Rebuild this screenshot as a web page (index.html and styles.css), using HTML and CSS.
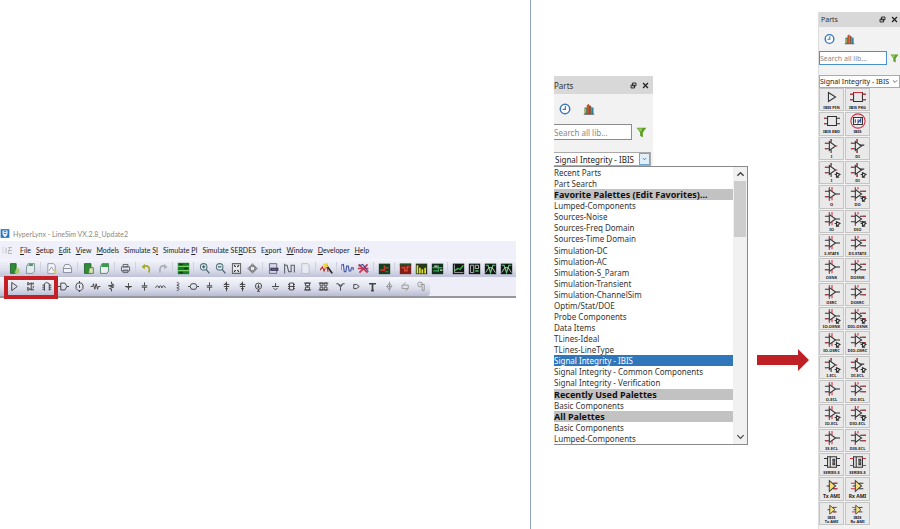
FILE: index.html
```html
<!DOCTYPE html>
<html lang="en">
<head>
  <meta charset="UTF-8">
  <title>HyperLynx - LineSim</title>
  <link rel="stylesheet" href="styles.css">
</head>
<body>
  <!-- shared icons -->
  <svg class="defs" aria-hidden="true">
    <symbol id="clock" viewBox="0 0 16 16"><circle cx="8" cy="8" r="6.3" fill="#fff" stroke="#3b78b8" stroke-width="2"/><path d="M8.500 4v4.500H5" fill="none" stroke="#3b78b8" stroke-width="1.500"/></symbol>
    <symbol id="books" viewBox="0 0 16 16"><path d="M2 6h4v9H2z" fill="#3f8f6b"/><path d="M5 3l3-2v14H5z" fill="#c6502f"/><path d="M8 3l3 1v11H8z" fill="#7d5a3b"/><path d="M11 6h3v9h-3z" fill="#2e7fa0"/><path d="M2 8h2v5H2z" fill="#d9a63b"/><path d="M1 15h14" stroke="#444"/></symbol>
    <symbol id="funnel" viewBox="0 0 16 16"><path d="M1 1h14L10 8v7l-4-2V8z" fill="#5c9e25"/><path d="M3 2h6L7 7z" fill="#9bd25c"/></symbol>
    <symbol id="float" viewBox="0 0 10 10"><path d="M3.500 1.500h5v4h-5zM1.500 4.500h5v4h-5z" fill="#ddd" stroke="#222" stroke-width="1.400"/></symbol>
    <symbol id="close" viewBox="0 0 10 10"><path d="M1.500 1.500l7 7M8.500 1.500l-7 7" stroke="#222" stroke-width="1.800"/></symbol>
    <symbol id="down" viewBox="0 0 10 10"><path d="M1.500 3L5 6.500 8.500 3" fill="none" stroke="#444" stroke-width="1.300"/></symbol>
    <symbol id="up" viewBox="0 0 10 10"><path d="M1.500 7L5 3.500 8.500 7" fill="none" stroke="#444" stroke-width="1.600"/></symbol>

    <!-- file toolbar -->
    <symbol id="new" viewBox="0 0 16 16"><path d="M3 2h7v12H3z" fill="#2f8b35" stroke="#1d5c23"/><path d="M10 8h4v6H8z" fill="#a6cf68"/></symbol>
    <symbol id="folder" viewBox="0 0 16 16"><path d="M3 6l2-4h8v9l-2 3H3z" fill="#e4e9ee" stroke="#6b8490"/><path d="M5 5l2-3h4v3z" fill="#4a9b5d"/></symbol>
    <symbol id="page" viewBox="0 0 16 16"><path d="M3.500 2h7l2 2v10h-9z" fill="#f5f6fc" stroke="#87899a"/><path d="M5 11l3-5 3 5" fill="none" stroke="#87899a"/><path d="M11 10h3v4h-3z" fill="#d8cf7a"/></symbol>
    <symbol id="blank" viewBox="0 0 16 16"><path d="M3.500 2h7l2 2v10h-9z" fill="#e9eaf2" stroke="#b5b7c5"/></symbol>
    <symbol id="open" viewBox="0 0 16 16"><path d="M3 7l2-4h5l3 4v6H3z" fill="#f2f3fa" stroke="#777b8c"/><path d="M3 8h9" stroke="#777b8c"/></symbol>
    <symbol id="book" viewBox="0 0 16 16"><path d="M3 2h8v12H3z" fill="#2f8b35" stroke="#1d5c23"/><path d="M9 7h5v7H8z" fill="#d6e4b0" stroke="#3a7a3c"/></symbol>
    <symbol id="save" viewBox="0 0 16 16"><path d="M3 6l2-4h8v9l-2 3H3z" fill="#eceef5" stroke="#3d7a4d"/><path d="M5 2h8v4H4z" fill="#3d9a4d"/></symbol>
    <symbol id="print" viewBox="0 0 16 16"><path d="M5 3h6v3H5zM3 6h10v5H3zM5 10h6v3H5z" fill="#dfe2ea" stroke="#4b4f5a"/></symbol>
    <symbol id="undo" viewBox="0 0 16 16"><path d="M4 6c5-3 9 0 7 7" fill="none" stroke="#a2a82c" stroke-width="2"/><path d="M2 6l4-4v7z" fill="#a2a82c"/></symbol>
    <symbol id="redo" viewBox="0 0 16 16"><path d="M12 6C7 3 4 6 5 13" fill="none" stroke="#a9adb8" stroke-width="2"/><path d="M14 6l-4-4v7z" fill="#a9adb8"/></symbol>
    <symbol id="stack" viewBox="0 0 16 16"><path d="M1 1h14v14H1z" fill="#187a25"/><path d="M1 5.500h14M1 10.500h14" stroke="#7ad06a" stroke-width="1.500"/><path d="M3 3h4M9 8h4M3 13h4" stroke="#0c3d12" stroke-width="2"/></symbol>
    <symbol id="zoomin" viewBox="0 0 16 16"><circle cx="7" cy="6" r="4" fill="#e5edf1" stroke="#557a85" stroke-width="1.400"/><path d="M10 9l4 5M5 6h4M7 4v4" stroke="#3e5d68" stroke-width="1.400"/></symbol>
    <symbol id="zoomout" viewBox="0 0 16 16"><circle cx="7" cy="6" r="4" fill="#e5edf1" stroke="#557a85" stroke-width="1.400"/><path d="M10 9l4 5M5 6h4" stroke="#3e5d68" stroke-width="1.400"/></symbol>
    <symbol id="fit" viewBox="0 0 16 16"><path d="M3 2h10v12H3z" fill="#e8eaef" stroke="#666" stroke-width="1.300"/><path d="M5 4l2 2M11 4L9 6M5 12l2-2M11 12l-2-2" stroke="#333" stroke-width="1.500"/></symbol>
    <symbol id="pan" viewBox="0 0 16 16"><path d="M8 2l2 3H6zM8 14l2-3H6zM2 8l3-2v4zM14 8l-3-2v4zM5 5h6v6H5z" fill="#e5e7ee" stroke="#666"/></symbol>
    <symbol id="scope" viewBox="0 0 16 16"><path d="M3 2h9v12H3z" fill="#d3d6ec" stroke="#55566a"/><path d="M4 7h10v4H4z" fill="#3d3f60"/><path d="M6 9h6" stroke="#d44"/></symbol>
    <symbol id="wave" viewBox="0 0 16 16"><path d="M2 2v12M2 4h3l2 8h3V4h4v9" fill="none" stroke="#5b5d66" stroke-width="1.300"/></symbol>
    <symbol id="wand" viewBox="0 0 16 16"><path d="M0 10l3-4 2 5 3-7 2 8" fill="none" stroke="#c8322a" stroke-width="1.500"/><path d="M8 4l7 10" stroke="#222" stroke-width="2"/><path d="M5 1l2 2 3-2-1 3 2 2H8L6 9V6L4 4z" fill="#ecd530"/></symbol>
    <symbol id="sine" viewBox="0 0 16 16"><path d="M0 10V4l3-1 1 9h2l1-7h2l1 6h2l1-4h2v3" fill="none" stroke="#3b50a5" stroke-width="1.300"/></symbol>
    <symbol id="cross" viewBox="0 0 16 16"><path d="M2 3l11 10M3 13L13 3M1 8h13" stroke="#c63654" stroke-width="2"/><path d="M2 5l5-2 4 5 3 4" fill="none" stroke="#4b4994" stroke-width="1.500"/></symbol>
    <symbol id="board" viewBox="0 0 16 16"><path d="M1 2h14v13H1z" fill="#173f20"/><path d="M3 10h5V4M8 7h5" fill="none" stroke="#c4342b" stroke-width="2"/><path d="M9 12h4" stroke="#35a349"/></symbol>
    <symbol id="heat" viewBox="0 0 16 16"><path d="M1 2h14v13H1z" fill="#7e2018"/><path d="M3 7h4v4h3V6h3" fill="none" stroke="#de4c36" stroke-width="1.500"/><path d="M1 2h14v2H1z" fill="#244b23"/></symbol>
    <symbol id="bars" viewBox="0 0 16 16"><path d="M1 2h14v13H1z" fill="#26381a"/><path d="M3 4v10M6 7v7M9 9v5M12.500 7v7" stroke="#e5e52c" stroke-width="2"/></symbol>
    <symbol id="grid" viewBox="0 0 16 16"><path d="M1 2h14v13H1z" fill="#12301c"/><path d="M2 7h12M3 11h6M9 4v8" stroke="#3cae56" stroke-width="1.500"/><path d="M4 5h4M11 10h3" stroke="#ddd" stroke-width="1.500"/></symbol>
    <symbol id="plot" viewBox="0 0 16 16"><path d="M1 2h14v13H1z" fill="#111914"/><path d="M3 3v10h11" fill="none" stroke="#bbb"/><path d="M3 11l4-3 3 1 4-5" fill="none" stroke="#4bbd5e" stroke-width="1.500"/></symbol>
    <symbol id="smith" viewBox="0 0 16 16"><path d="M1 2h14v13H1z" fill="#111914"/><path d="M3 4v9h4V4zM9 4h4v4H9z" fill="none" stroke="#ccc"/><path d="M9 11h4" stroke="#4bbd5e" stroke-width="2"/></symbol>
    <symbol id="eye" viewBox="0 0 16 16"><path d="M1 2h14v13H1z" fill="#111914"/><path d="M2 4h3l3 9 3-9h3" fill="none" stroke="#63c873" stroke-width="1.500"/><path d="M2 13l4-6h4l4 6" fill="none" stroke="#ddd"/></symbol>

    <!-- component toolbar -->
    <symbol id="buf" viewBox="0 0 16 16"><path d="M4 2v12l8-6z"/></symbol>
    <symbol id="ibis" viewBox="0 0 16 16"><path d="M4 2v4l3-2zM4 9v5l3-2zM9 2v12M12 2v3M12 7v3M12 12v2M7 4h5M7 12h5"/></symbol>
    <symbol id="chip" viewBox="0 0 16 16"><path d="M5 14V4l3-2 4 2v10M2 6h3M2 9h3M2 12h3M12 6h3M12 9h3M12 12h3"/></symbol>
    <symbol id="tline" viewBox="0 0 16 16"><path d="M0 8h4M13 8h3M4 3h6l3 5-3 5H4z"/></symbol>
    <symbol id="cyl" viewBox="0 0 16 16"><path d="M8 0v3M8 14v2M5 3h6l2 3v5l-3 3H6l-3-3V6zM8 6v4"/></symbol>
    <symbol id="res" viewBox="0 0 16 16"><path d="M1 8h3l1-4 2 8 2-8 2 8 1-4h3"/></symbol>
    <symbol id="pull" viewBox="0 0 16 16"><path d="M8 1v3l3 1-6 2 6 2-6 2 3 1v3M3 7h9"/></symbol>
    <symbol id="cap" viewBox="0 0 16 16"><path d="M8 3v4M8 9v4M3 8h10M5 9h6"/></symbol>
    <symbol id="gcap" viewBox="0 0 16 16"><path d="M8 2v5M8 9v5M4 7h8M4 9h8"/></symbol>
    <symbol id="arc" viewBox="0 0 16 16"><path d="M1 10c1-4 4-4 5 0 0-4 4-4 4 0 1-4 4-4 5 0"/></symbol>
    <symbol id="ind" viewBox="0 0 16 16"><path d="M7 2c4 0 4 4 0 4 4 0 4 4 0 4 4 0 4 4 0 4"/></symbol>
    <symbol id="bead" viewBox="0 0 16 16"><path d="M0 8h3M13 8h3M5 4h6l2 4-2 4H5L3 8z"/></symbol>
    <symbol id="src" viewBox="0 0 16 16"><path d="M8 12v3M6 15h4M8 5v5M6 8l2 2 2-2"/><circle cx="8" cy="7.500" r="4.500"/></symbol>
    <symbol id="diff" viewBox="0 0 16 16"><path d="M8 1v14M4 5h8M4 8h8M6 11h4M5 5l3-3"/></symbol>
    <symbol id="gnd" viewBox="0 0 16 16"><path d="M8 3v5M3 8h10M5 10l3 3 3-3"/></symbol>
    <symbol id="via" viewBox="0 0 16 16"><path d="M5 3h6v10H5zM3 5h2M3 8h10M3 11h2M11 5h2M11 11h2"/></symbol>
    <symbol id="pair" viewBox="0 0 16 16"><path d="M5 3h6v4H5zM5 9h6v4H5zM8 7v2M3 3h10M3 13h10"/></symbol>
    <symbol id="quad" viewBox="0 0 16 16"><path d="M3 3h4v4H3zM9 3h4v4H9zM3 9h4v4H3zM9 9h4v4H9zM1 3h14M1 13h14"/></symbol>
    <symbol id="ant" viewBox="0 0 16 16"><path d="M2 4h3l3 5 3-5h3M8 9v5M5 6h6"/></symbol>
    <symbol id="port" viewBox="0 0 16 16"><path d="M4 5h4l4 3-4 3H4z"/></symbol>
    <symbol id="text" viewBox="0 0 16 16"><path d="M3 4h10M8 4v10M6 14h4" stroke-width="2.500"/></symbol>
    <symbol id="hand" viewBox="0 0 16 16"><path d="M8 1v14M4 8h8M8 3l3 4-3 6-4-5z"/></symbol>
    <symbol id="rot" viewBox="0 0 16 16"><path d="M3 6h9v5H3zM8 2L5 6M12 11l-4 3"/></symbol>
    <symbol id="clip" viewBox="0 0 16 16"><circle cx="6" cy="5" r="3.500"/><path d="M6 5h6v9H9V8"/></symbol>

    <!-- palette gates -->
    <symbol id="g-tri" viewBox="0 0 24 18"><path d="M9 4v10l7-5z"/><path d="M4 6h5M4 12h5"/></symbol>
    <symbol id="g-i" viewBox="0 0 24 18"><use href="#g-tri"/><path d="M11 5V1M11 13v4"/><path class="red" d="M4 6h2M4 12h2M11 1v2M16 9h2"/></symbol>
    <symbol id="g-di" viewBox="0 0 24 18"><use href="#g-tri"/><path d="M11 5V1M11 13v4M14 8h5"/><path class="red" d="M4 6h3M4 12h3M11 1v3M11 14v3"/></symbol>
    <symbol id="g-mini" viewBox="0 0 24 18"><path d="M17 12v5l4-3zM15 14h2M17 17h3"/></symbol>
    <symbol id="g-o" viewBox="0 0 24 18"><use href="#g-tri"/><path d="M16 9h5"/><path class="red" d="M9 1v4M12 1v5M9 13v4M12 12v4M4 12h3"/></symbol>
    <symbol id="g-do" viewBox="0 0 24 18"><use href="#g-tri"/><path d="M14 6h7M14 12h7"/><path class="red" d="M9 1v4M12 1v3M9 14v3M17 6h4M17 12h4M4 6h2"/></symbol>
    <symbol id="g-pkg" viewBox="0 0 24 18"><path d="M7 4h10v10H7zM3 6h4M3 12h4M17 6h4M17 12h4"/></symbol>
    <symbol id="g-series" viewBox="0 0 24 18"><path d="M7 3h10v12H7zM3 5h4M3 13h4M17 5h4M17 13h4M10 3v12M13 6h2v2h-2zM13 10h2v2h-2z"/></symbol>
    <symbol id="g-ami" viewBox="0 0 24 18"><path d="M9 3v12l7-6z" fill="#f6e17b" stroke="#444"/><path d="M9 9H6M13 6h5M13 12h5"/></symbol>
  </svg>

  <main class="page">
    <section class="left">
      <div class="app">
        <header class="title">
          <svg class="logo" viewBox="0 0 16 16"><path d="M1 1h14v14H1z" fill="#2f76b8"/><path d="M4 3h8v5c0 3-2 4-4 6-2-2-4-3-4-6z" fill="#e9f4fb"/><path d="M6 5h4M6 8h4" stroke="#2f76b8" stroke-width="1.500"/></svg>
          <span>HyperLynx - LineSim VX.2.8_Update2</span>
        </header>
        <nav class="menu">
          <svg class="grip" viewBox="0 0 14 12"><path d="M1 1v10" stroke="#999" stroke-dasharray="1 1.500"/><path d="M5 2v8M8 2h5M8 6h5M8 10h5M10 2l-2 8" stroke="#aaa" fill="none"/></svg>
          <a href="#"><u>F</u>ile</a>
          <a href="#"><u>S</u>etup</a>
          <a href="#"><u>E</u>dit</a>
          <a href="#"><u>V</u>iew</a>
          <a href="#"><u>M</u>odels</a>
          <a href="#">Simulate S<u>I</u></a>
          <a href="#">Simulate <u>P</u>I</a>
          <a href="#">Simulate SE<u>R</u>DES</a>
          <a href="#">E<u>x</u>port</a>
          <a href="#"><u>W</u>indow</a>
          <a href="#"><u>D</u>eveloper</a>
          <a href="#"><u>H</u>elp</a>
        </nav>
        <div class="tools">
          <button aria-label="New"><svg><use href="#new"/></svg></button>
          <button aria-label="Open"><svg><use href="#folder"/></svg></button>
          <i></i>
          <button aria-label="New sheet"><svg><use href="#page"/></svg></button>
          <button aria-label="Open sheet"><svg><use href="#open"/></svg></button>
          <i></i>
          <button aria-label="Library"><svg><use href="#book"/></svg></button>
          <button aria-label="Save"><svg><use href="#save"/></svg></button>
          <i></i>
          <button aria-label="Print"><svg><use href="#print"/></svg></button>
          <i></i>
          <button aria-label="Undo"><svg><use href="#undo"/></svg></button>
          <button aria-label="Redo"><svg><use href="#redo"/></svg></button>
          <i></i>
          <button aria-label="Stackup"><svg><use href="#stack"/></svg></button>
          <i></i>
          <button aria-label="Zoom in"><svg><use href="#zoomin"/></svg></button>
          <button aria-label="Zoom out"><svg><use href="#zoomout"/></svg></button>
          <button aria-label="Fit"><svg><use href="#fit"/></svg></button>
          <button aria-label="Pan"><svg><use href="#pan"/></svg></button>
          <i></i>
          <button aria-label="Scope"><svg><use href="#scope"/></svg></button>
          <button aria-label="Waveform"><svg><use href="#wave"/></svg></button>
          <button aria-label="Report"><svg><use href="#blank"/></svg></button>
          <i></i>
          <button aria-label="Wizard"><svg><use href="#wand"/></svg></button>
          <i></i>
          <button aria-label="Signal"><svg><use href="#sine"/></svg></button>
          <button aria-label="Crosstalk"><svg><use href="#cross"/></svg></button>
          <i></i>
          <button aria-label="Board"><svg><use href="#board"/></svg></button>
          <i></i>
          <button aria-label="Thermal"><svg><use href="#heat"/></svg></button>
          <button aria-label="Spectrum"><svg><use href="#bars"/></svg></button>
          <button aria-label="Table"><svg><use href="#grid"/></svg></button>
          <i></i>
          <button aria-label="Plot"><svg><use href="#plot"/></svg></button>
          <button aria-label="Smith chart"><svg><use href="#smith"/></svg></button>
          <button aria-label="Eye"><svg><use href="#eye"/></svg></button>
          <button aria-label="Eye mask"><svg><use href="#eye"/></svg></button>
        </div>
        <div class="parts-row">
          <div class="parts-bar">
            <button aria-label="Buffer"><svg><use href="#buf"/></svg></button>
            <button aria-label="IBIS"><svg><use href="#ibis"/></svg></button>
            <button aria-label="Package"><svg><use href="#chip"/></svg></button>
            <button aria-label="Line"><svg><use href="#tline"/></svg></button>
            <button aria-label="Cable"><svg><use href="#cyl"/></svg></button>
            <button aria-label="Resistor"><svg><use href="#res"/></svg></button>
            <button aria-label="Pull-up"><svg><use href="#pull"/></svg></button>
            <button aria-label="Capacitor"><svg><use href="#cap"/></svg></button>
            <button aria-label="Ground capacitor"><svg><use href="#gcap"/></svg></button>
            <button aria-label="Inductor"><svg><use href="#arc"/></svg></button>
            <button aria-label="Vertical inductor"><svg><use href="#ind"/></svg></button>
            <button aria-label="Bead"><svg><use href="#bead"/></svg></button>
            <button aria-label="Capacitor pair"><svg><use href="#gcap"/></svg></button>
            <button aria-label="Diode"><svg><use href="#diff"/></svg></button>
            <button aria-label="Clamp"><svg><use href="#diff"/></svg></button>
            <button aria-label="Source"><svg><use href="#src"/></svg></button>
            <button aria-label="Ground"><svg><use href="#gnd"/></svg></button>
            <button aria-label="Via"><svg><use href="#via"/></svg></button>
            <button aria-label="Via pair"><svg><use href="#pair"/></svg></button>
            <button aria-label="S-parameters"><svg><use href="#quad"/></svg></button>
            <button aria-label="Probe"><svg><use href="#ant"/></svg></button>
            <button aria-label="Port"><svg><use href="#port"/></svg></button>
            <button aria-label="Text"><svg><use href="#text"/></svg></button>
            <button aria-label="Move" class="dim"><svg><use href="#hand"/></svg></button>
            <button aria-label="Rotate" class="dim"><svg><use href="#rot"/></svg></button>
            <button aria-label="Attach" class="dim"><svg><use href="#clip"/></svg></button>
            <span class="mark"></span>
          </div>
        </div>
      </div>
    </section>

    <section class="right">
      <div class="picker">
        <div class="panel small">
          <div class="head">
            <h2>Parts</h2>
            <button aria-label="Float"><svg><use href="#float"/></svg></button>
            <button aria-label="Close"><svg><use href="#close"/></svg></button>
          </div>
          <div class="tabs">
            <button aria-label="Recent"><svg><use href="#clock"/></svg></button>
            <button aria-label="Libraries"><svg><use href="#books"/></svg></button>
          </div>
          <div class="search">
            <input type="text" placeholder="Search all lib..." aria-label="Search all libraries">
            <button aria-label="Filter"><svg><use href="#funnel"/></svg></button>
          </div>
          <div class="combo">
            <select aria-label="Palette"><option>Signal Integrity - IBIS</option></select>
            <svg><use href="#down"/></svg>
          </div>
        </div>
        <div class="list">
          <ul role="listbox" aria-label="Palettes">
            <li role="option">Recent Parts</li>
            <li role="option">Part Search</li>
            <li class="group">Favorite Palettes (Edit Favorites)...</li>
            <li role="option">Lumped-Components</li>
            <li role="option">Sources-Noise</li>
            <li role="option">Sources-Freq Domain</li>
            <li role="option">Sources-Time Domain</li>
            <li role="option">Simulation-DC</li>
            <li role="option">Simulation-AC</li>
            <li role="option">Simulation-S_Param</li>
            <li role="option">Simulation-Transient</li>
            <li role="option">Simulation-ChannelSim</li>
            <li role="option">Optim/Stat/DOE</li>
            <li role="option">Probe Components</li>
            <li role="option">Data Items</li>
            <li role="option">TLines-Ideal</li>
            <li role="option">TLines-LineType</li>
            <li role="option" class="selected" aria-selected="true">Signal Integrity - IBIS</li>
            <li role="option">Signal Integrity - Common Components</li>
            <li role="option">Signal Integrity - Verification</li>
            <li class="group">Recently Used Palettes</li>
            <li role="option">Basic Components</li>
            <li class="group">All Palettes</li>
            <li role="option">Basic Components</li>
            <li role="option">Lumped-Components</li>
          </ul>
          <div class="scroll">
            <svg><use href="#up"/></svg>
            <span class="thumb"></span>
            <svg><use href="#down"/></svg>
          </div>
        </div>
      </div>

      <svg class="arrow" viewBox="0 0 52 24"><path d="M0 7h41V1l11 11-11 11v-6H0z" fill="#bf2026"/></svg>

      <div class="panel tall">
        <div class="head">
          <h2>Parts</h2>
          <button aria-label="Float"><svg><use href="#float"/></svg></button>
          <button aria-label="Close"><svg><use href="#close"/></svg></button>
        </div>
        <div class="tabs">
          <button aria-label="Recent"><svg><use href="#clock"/></svg></button>
          <button aria-label="Libraries"><svg><use href="#books"/></svg></button>
        </div>
        <div class="search">
          <input type="text" placeholder="Search all lib..." aria-label="Search all libraries">
          <button aria-label="Filter"><svg><use href="#funnel"/></svg></button>
        </div>
        <div class="combo">
          <select aria-label="Palette"><option>Signal Integrity - IBIS</option></select>
          <svg><use href="#down"/></svg>
        </div>
        <div class="cells">
          <button><svg viewBox="0 0 24 18"><path d="M8 4v10l8-5z"/></svg>IBIS PIN</button>
          <button><svg viewBox="0 0 24 18"><use href="#g-pkg"/><path class="red" d="M3 6h4M3 12h4M17 6h4M17 12h4M7 4h10"/></svg>IBIS PKG</button>
          <button><svg viewBox="0 0 24 18"><use href="#g-pkg"/><path class="red" d="M3 6h2M3 12h2"/></svg>IBIS EBD</button>
          <button><svg viewBox="0 0 24 18"><circle class="red" cx="12" cy="9" r="8"/><path d="M7 5h10v8H7z" fill="#fff"/><path d="M9 7v4M12 7v4l3-4v4" stroke="#35479b"/></svg>IBIS</button>
          <button><svg><use href="#g-i"/></svg>I</button>
          <button><svg><use href="#g-di"/></svg>DI</button>
          <button><svg viewBox="0 0 24 18"><use href="#g-i"/><use href="#g-mini"/></svg>I</button>
          <button><svg viewBox="0 0 24 18"><use href="#g-di"/><use href="#g-mini"/></svg>DI</button>
          <button><svg><use href="#g-o"/></svg>O</button>
          <button><svg viewBox="0 0 24 18"><use href="#g-do"/><use href="#g-mini"/></svg>DO</button>
          <button><svg viewBox="0 0 24 18"><use href="#g-o"/><use href="#g-mini"/></svg>IO</button>
          <button><svg viewBox="0 0 24 18"><use href="#g-do"/><use href="#g-mini"/></svg>DIO</button>
          <button><svg><use href="#g-o"/></svg>3-STATE</button>
          <button><svg><use href="#g-do"/></svg>D3-STATE</button>
          <button><svg><use href="#g-o"/></svg>OSNK</button>
          <button><svg><use href="#g-do"/></svg>DOSNK</button>
          <button><svg><use href="#g-o"/></svg>OSRC</button>
          <button><svg><use href="#g-do"/></svg>DOSRC</button>
          <button><svg viewBox="0 0 24 18"><use href="#g-o"/><use href="#g-mini"/></svg>IO-OSNK</button>
          <button><svg viewBox="0 0 24 18"><use href="#g-do"/><use href="#g-mini"/></svg>DIO-OSNK</button>
          <button><svg viewBox="0 0 24 18"><use href="#g-o"/><use href="#g-mini"/></svg>IO-OSRC</button>
          <button><svg viewBox="0 0 24 18"><use href="#g-do"/><use href="#g-mini"/></svg>DIO-OSRC</button>
          <button><svg viewBox="0 0 24 18"><use href="#g-i"/><use href="#g-mini"/></svg>I-ECL</button>
          <button><svg viewBox="0 0 24 18"><use href="#g-di"/><use href="#g-mini"/></svg>DI-ECL</button>
          <button><svg><use href="#g-o"/></svg>O-ECL</button>
          <button><svg><use href="#g-do"/></svg>DO-ECL</button>
          <button><svg viewBox="0 0 24 18"><use href="#g-o"/><use href="#g-mini"/></svg>IO-ECL</button>
          <button><svg viewBox="0 0 24 18"><use href="#g-do"/><use href="#g-mini"/></svg>DIO-ECL</button>
          <button><svg><use href="#g-o"/></svg>3S-ECL</button>
          <button><svg><use href="#g-do"/></svg>D3S-ECL</button>
          <button><svg><use href="#g-series"/></svg>SERIES-S</button>
          <button><svg viewBox="0 0 24 18"><use href="#g-series"/><path class="red" d="M3 5h4M3 13h4M17 5h4M17 13h4"/></svg>SERIES-S</button>
          <button class="ami"><svg viewBox="0 0 24 18"><use href="#g-ami"/><path class="red" d="M14 6h4M14 12h4"/></svg>Tx AMI</button>
          <button class="ami"><svg viewBox="0 0 24 18"><use href="#g-ami"/><path class="red" d="M4 6h5M4 12h5"/></svg>Rx AMI</button>
          <button class="ami two"><svg viewBox="0 0 24 18"><use href="#g-ami"/><path class="red" d="M14 6h4M14 12h4"/></svg><span>IBIS<br>Tx AMI</span></button>
          <button class="ami two"><svg viewBox="0 0 24 18"><use href="#g-ami"/><path class="red" d="M4 6h5M4 12h5"/></svg><span>IBIS<br>Rx AMI</span></button>
        </div>
      </div>
    </section>
  </main>
</body>
</html>
```

FILE: styles.css
```css
* {
  box-sizing: border-box;
}

body {
  margin: 0;
  background: #fff;
  color: #333;
  font-family: "Noto Sans", "Open Sans", sans-serif;
  font-size: 8px;
}

button {
  display: flex;
  align-items: center;
  justify-content: center;
  margin: 0;
  padding: 0;
  border: 0;
  background: none;
  font: inherit;
  color: inherit;
}

.defs {
  position: absolute;
  width: 0;
  height: 0;
}

.page {
  display: flex;
  min-height: 100vh;
}

.left {
  flex: 0 0 59%;
  padding: 226px 14px 0 0;
  border-right: 1px solid #8fa3cc;
}

.right {
  flex: 1;
  min-width: 0;
  display: flex;
  align-items: flex-start;
  padding-left: 23px;
}

/* main window */
.app {
  font-family: Lato, "Open Sans", sans-serif;
  font-size: 7px;
}

.title {
  display: flex;
  align-items: center;
  gap: 3px;
  height: 15px;
  color: #888;
}

.logo {
  width: 10px;
  height: 11px;
}

.menu {
  display: flex;
  align-items: center;
  gap: 5px;
  height: 18px;
  background: #eff0f9;
}

.menu a {
  color: #222;
  text-decoration: none;
  white-space: nowrap;
}

.grip {
  width: 15px;
  height: 9px;
}

.tools {
  display: flex;
  align-items: center;
  height: 18px;
  padding-left: 6px;
  background: linear-gradient(#f5f6fc, #dcdeec 60%, #bfc2d8);
}

.tools button {
  width: 16px;
  height: 16px;
}

.tools svg {
  width: 13px;
  height: 13px;
}

.tools i {
  width: 1px;
  height: 12px;
  margin: 0 2px;
  background: #cfd1df;
}

.parts-row {
  border-bottom: 2px solid #96979f;
  background: #edeef7;
}

.parts-bar {
  position: relative;
  display: grid;
  grid-template-columns: repeat(26, 1fr);
  width: 430px;
  height: 19px;
  padding-left: 6px;
  border-radius: 0 3px 3px 0;
  background: linear-gradient(#f8f9fd, #dcdeec 60%, #b9bcd2);
}

.parts-bar svg {
  width: 11px;
  height: 11px;
  fill: none;
  stroke: #444;
  stroke-width: 1.4px;
}

.parts-bar .dim svg {
  stroke: #999;
}

/* red frame round the first three parts */
.mark {
  position: absolute;
  left: 4px;
  top: -1px;
  width: 54px;
  height: 23px;
  border: 4px solid #c51f26;
}

/* parts panels */
.panel {
  background: #f2f2f2;
}

.head {
  display: flex;
  align-items: center;
  gap: 5px;
  padding-right: 4px;
  background: #d8d8d8;
}

.head h2 {
  flex: 1;
  margin: 0;
  font-size: inherit;
  font-weight: normal;
}

.head svg {
  width: 7px;
  height: 7px;
}

.tabs {
  display: flex;
}

.tabs svg {
  width: 12px;
  height: 12px;
}

.search {
  display: flex;
  align-items: center;
}

.search input {
  flex: 1;
  min-width: 0;
  height: 100%;
  padding: 0;
  border: 1px solid #8c8c8c;
  background: #fff;
  font: inherit;
}

.search input::placeholder {
  color: #888;
}

.search svg {
  width: 11px;
  height: 11px;
}

.combo {
  display: flex;
  border: 1px solid #aaa;
  background: #fff;
}

.combo select {
  flex: 1;
  min-width: 0;
  padding: 0 0 0 1px;
  border: 0;
  appearance: none;
  background: none;
  color: #222;
  font: inherit;
}

.combo svg {
  flex: none;
  width: 11px;
  height: 100%;
  padding: 2px;
}

.picker {
  flex: none;
  width: 194px;
  padding-top: 76px;
}

.small {
  width: 99px;
}

.small .head {
  height: 18px;
}

.small .tabs {
  gap: 12px;
  padding: 9px 5px;
}

.small .search {
  height: 16px;
  gap: 4px;
  padding-right: 6px;
}

.small .search input {
  border-left: 0;
}

.small .combo {
  height: 14px;
  margin: 12px 2px 0 0;
  border-left: 0;
}

.small .combo svg {
  border: 1px solid #6fa8d8;
  background: #e1effa;
}

.list {
  display: flex;
  min-height: 279px;
  border: 1px solid #8a8a8a;
  border-left: 0;
  background: #fff;
}

.list ul {
  flex: 1;
  display: flex;
  flex-direction: column;
  justify-content: space-between;
  margin: 0;
  padding: 0;
  list-style: none;
}

.list li {
  height: 11px;
  line-height: 11px;
  white-space: nowrap;
}

.list .group {
  background: #c2c2c2;
  color: #111;
  font-size: 9px;
  font-weight: bold;
}

.list .selected {
  background: #2f76bb;
  color: #fff;
}

.scroll {
  display: flex;
  flex-direction: column;
  align-items: center;
  width: 14px;
  background: #f1f1f1;
}

.scroll svg {
  width: 9px;
  height: 14px;
}

.thumb {
  width: 12px;
  height: 56px;
  margin-bottom: auto;
  background: #cdcdcd;
}

.arrow {
  flex: none;
  width: 52px;
  height: 24px;
  margin: 348px 9px 0;
}

.tall {
  flex: 1;
  min-width: 0;
  display: flex;
  flex-direction: column;
  height: calc(100vh - 12px);
  margin-top: 12px;
  border-left: 1px solid #ddd;
  font-size: 7px;
}

.tall .head {
  height: 15px;
  padding: 0 2px;
}

.tall .tabs {
  gap: 9px;
  padding: 6px 5px;
}

.tall .tabs svg {
  width: 11px;
}

.tall .search {
  height: 14px;
  gap: 3px;
  padding-right: 1px;
}

.tall .search input {
  border: 1px solid #4a90d0;
}

.tall .search svg {
  width: 9px;
}

.tall .combo {
  height: 13px;
  margin-top: 10px;
}

.tall .combo select {
  padding: 0;
}

.tall .combo svg {
  width: 8px;
  padding: 1px;
}

.cells {
  flex: 1;
  display: grid;
  grid-template-columns: 25px 25px;
  grid-template-rows: repeat(18, minmax(0, 1fr));
  gap: 1px;
  min-height: 0;
  padding-bottom: 4px;
}

.cells button {
  flex-direction: column;
  border: 1px solid #c4c4c4;
  background: #e9e9e9;
  color: #222;
  font-size: 4px;
  font-weight: bold;
  line-height: 5px;
  white-space: nowrap;
}

.cells svg {
  flex: 0 1 16px;
  width: 22px;
  min-height: 0;
  fill: none;
  stroke: #333;
  stroke-width: 1.2px;
}

.cells .ami {
  font-size: 5px;
}

.cells .two {
  font-size: 4px;
  line-height: 4px;
}

.cells .red {
  stroke: #d02f40;
}

.red {
  stroke: #d02f40;
}
```
